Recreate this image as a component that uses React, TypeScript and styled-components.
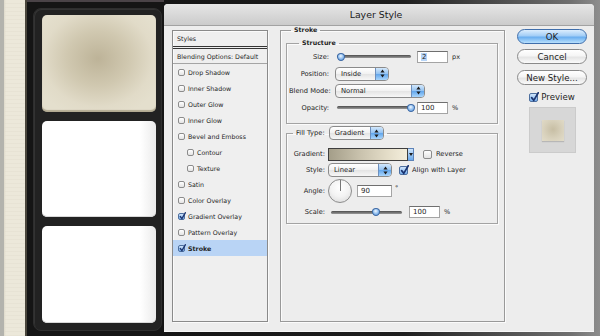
import React from 'react';
import styled, { createGlobalStyle, css } from 'styled-components';

const GlobalStyle = createGlobalStyle`
  html, body { margin: 0; padding: 0; background: #1a1a1a; }
  body { font-family: "DejaVu Sans", "Liberation Sans", sans-serif; color: #1e1e1e; }
  * { box-sizing: border-box; }
`;

const Screen = styled.div`
  display: flex;
  width: 600px;
  height: 336px;
  overflow: hidden;
`;

const Paper = styled.div`
  width: 27px;
  flex: none;
  background:
    linear-gradient(to right, #b3b3ad 0, #b3b3ad 4px, #dedacb 4px, transparent 6px, transparent 25px, #4a463c 25px),
    repeating-linear-gradient(0deg, rgba(120, 110, 80, 0.04) 0 1px, transparent 1px 4px),
    #ece8da;
`;

const Sidebar = styled.div`
  width: 137px;
  flex: none;
  display: flex;
  padding: 8px 2px 5px 6px;
  background: linear-gradient(#4a4347 0, #4a4347 2px, #151515 2px);
`;

const Tray = styled.div`
  flex: 1;
  display: flex;
  flex-direction: column;
  gap: 9px;
  padding: 6px 5px 7px 8px;
  background: #222;
  border: 1px solid #2e2e2e;
  border-radius: 8px;
  box-shadow: inset 1px 1px 0 #333;
`;

const Card = styled.div<{ $tone: 'cream' | 'white' }>`
  flex: 1;
  border-radius: 5px;
  ${p =>
    p.$tone === 'cream'
      ? css`
          background: radial-gradient(ellipse 60% 62% at 49% 45%, #bdb398 0%, #d0c8b0 45%, #e1dbc8 80%, #e4dfcd 100%);
          box-shadow: inset 0 -2px 1px rgba(120, 108, 78, 0.45);
        `
      : css`
          background: linear-gradient(to right, #ffffff 0, #ffffff 86%, #ebebeb 100%);
          box-shadow: inset 0 -1px 0 #d8d8d8;
        `}
`;

const Backdrop = styled.div`
  flex: 1;
  display: flex;
  padding: 4px 6px 5px 0;
  background: linear-gradient(to right, #151515 0%, #1f1f1f 55%, #6f6f6f 93%, #8d8d8d 100%);
`;

const Dialog = styled.div`
  flex: 1;
  display: flex;
  flex-direction: column;
  background: #ededed;
  border-radius: 4px 4px 0 0;
  overflow: hidden;
  box-shadow: 0 1px 0 #f8f8f8;
`;

const TitleBar = styled.div`
  height: 22px;
  flex: none;
  display: flex;
  align-items: center;
  justify-content: center;
  padding-right: 6px;
  font-size: 9.4px;
  color: #1a1a1a;
  background: linear-gradient(#e6e6e6, #cbcbcb);
  border-bottom: 1px solid #a2a2a2;
`;

const Body = styled.div`
  flex: 1;
  display: flex;
  align-items: flex-start;
  gap: 12px;
  padding: 4px 7px 9px 8px;
`;

/* ---------- styles list ---------- */

const StyleList = styled.div`
  width: 96px;
  height: 292px;
  flex: none;
  display: flex;
  flex-direction: column;
  background: #efefef;
  border: 1px solid #8a8a8a;
  box-shadow: inset 1px 1px 0 #fafafa, 1px 1px 0 #fafafa;
  font-size: 6.3px;
  color: #1e1e1e;
`;

const ListHead = styled.div`
  height: 18px;
  flex: none;
  display: flex;
  align-items: center;
  padding-left: 4px;
  border-bottom: 3px double #353535;
`;

const ListBlend = styled.div`
  height: 15px;
  flex: none;
  display: flex;
  align-items: center;
  padding-left: 4px;
  border-bottom: 1px solid #a5a5a5;
`;

const ListItem = styled.div<{ $indent?: boolean; $active?: boolean }>`
  height: 16px;
  flex: none;
  display: flex;
  align-items: center;
  gap: 3px;
  padding-left: ${p => (p.$indent ? 14 : 5)}px;
  background: ${p => (p.$active ? '#b9d4f5' : 'transparent')};
  font-weight: ${p => (p.$active ? 'bold' : 'normal')};
`;

const Box = styled.span<{ $on?: boolean; $size: number }>`
  position: relative;
  flex: none;
  width: ${p => p.$size}px;
  height: ${p => p.$size}px;
  border-radius: 2px;
  border: 1px solid ${p => (p.$on ? '#4d6f9f' : '#8c8c8c')};
  background: ${p => (p.$on ? 'linear-gradient(#cfe4fb, #78b0ee)' : 'linear-gradient(#ffffff, #e4e4e4)')};

  svg {
    position: absolute;
    left: 0;
    top: -2px;
  }
`;

const Checkbox = ({ on, size = 7 }: { on?: boolean; size?: number }) => (
  <Box $on={on} $size={size}>
    {on && (
      <svg width={size} height={size + 1} viewBox="0 0 10 11">
        <path d="M1.8 6.2 L4.2 9.2 L9.2 0.8" fill="none" stroke="#1b3470" strokeWidth="1.9" strokeLinecap="round" />
      </svg>
    )}
  </Box>
);

/* ---------- group boxes ---------- */

const Group = styled.fieldset<{ $pad: string }>`
  margin: 0;
  min-width: 0;
  padding: ${p => p.$pad};
  border: 1px solid #a3a3a3;
  box-shadow: inset 1px 1px 0 #fbfbfb, 1px 1px 0 #fbfbfb;
`;

const MainGroup = styled(Group)`
  width: 225px;
  height: 296px;
  flex: none;
  margin-top: -4px;
  border-color: #999;
`;

const Legend = styled.legend<{ $offset: number }>`
  margin-left: ${p => p.$offset}px;
  padding: 0 3px;
  font-size: 6.3px;
  font-weight: bold;
  line-height: 8px;
  display: flex;
  align-items: center;
  gap: 4px;
`;

const LegendLabel = styled.span`
  font-weight: normal;
  font-size: 6.7px;
`;

const Rows = styled.div`
  display: flex;
  flex-direction: column;
  gap: 2px;
`;

const Row = styled.div<{ $h?: number }>`
  height: ${p => p.$h ?? 15}px;
  display: flex;
  align-items: center;
  font-size: 6.7px;
`;

const Label = styled.span<{ $w: number; $gap: number }>`
  flex: none;
  width: ${p => p.$w}px;
  margin-right: ${p => p.$gap}px;
  text-align: right;
  white-space: nowrap;
`;

const Unit = styled.span<{ $gap?: number; $top?: boolean }>`
  margin-left: ${p => p.$gap ?? 4}px;
  font-size: 6.5px;
  align-self: ${p => (p.$top ? 'flex-start' : 'center')};
  margin-top: ${p => (p.$top ? 5 : 0)}px;
`;

const Text = styled.span<{ $gap?: number }>`
  margin-left: ${p => p.$gap ?? 4}px;
  white-space: nowrap;
`;

const Spacer = styled.span<{ $w: number }>`
  flex: none;
  width: ${p => p.$w}px;
`;

/* ---------- controls ---------- */

const Track = styled.div<{ $w: number; $gap: number }>`
  position: relative;
  flex: none;
  width: ${p => p.$w}px;
  height: 3px;
  margin-left: ${p => p.$gap}px;
  border-radius: 2px;
  background: linear-gradient(#4c4c4c, #9a9a9a);
`;

const Thumb = styled.span`
  position: absolute;
  top: 50%;
  width: 8px;
  height: 8px;
  margin: -4px 0 0 -4px;
  border-radius: 50% 50% 50% 50% / 45% 45% 55% 55%;
  border: 1px solid #3d6aa6;
  background: radial-gradient(circle at 45% 35%, #f2f8ff 0%, #9cc6f2 45%, #4f8dd6 100%);
`;

const Slider = ({ w, gap, value }: { w: number; gap: number; value: number }) => (
  <Track $w={w} $gap={gap}>
    <Thumb style={{ left: `${value}%` }} />
  </Track>
);

const Field = styled.span<{ $w: number; $gap: number }>`
  flex: none;
  display: flex;
  align-items: center;
  width: ${p => p.$w}px;
  height: 12px;
  margin-left: ${p => p.$gap}px;
  padding-left: 3px;
  background: #fff;
  border: 1px solid #a4a4a4;
  border-top-color: #6f6f6f;
  font-size: 7px;
`;

const Selected = styled.span`
  background: #b7d5f8;
  padding: 0 1px;
`;

const Popup = styled.span<{ $w: number }>`
  flex: none;
  display: flex;
  width: ${p => p.$w}px;
  height: 14px;
  border: 1px solid #8b8b8b;
  border-radius: 4px;
  overflow: hidden;
  background: linear-gradient(#ffffff 0%, #f1f1f1 50%, #e4e4e4 52%, #f7f7f7 100%);
  font-size: 6.8px;
  font-weight: normal;
`;

const PopupText = styled.span`
  flex: 1;
  display: flex;
  align-items: center;
  padding-left: 5px;
`;

const PopupArrows = styled.span`
  width: 13px;
  display: flex;
  align-items: center;
  justify-content: center;
  border-left: 1px solid #6d8fbd;
  background: linear-gradient(#d3e8fc 0%, #94c3f2 48%, #62a6ec 52%, #aad6fc 100%);
`;

const Arrows = () => (
  <svg width="5" height="9" viewBox="0 0 5 9">
    <path d="M2.5 0.5 L4.6 3.5 L0.4 3.5Z M0.4 5.5 L4.6 5.5 L2.5 8.5Z" fill="#1c1c1c" />
  </svg>
);

const Select = ({ w, value }: { w: number; value: string }) => (
  <Popup $w={w}>
    <PopupText>{value}</PopupText>
    <PopupArrows>
      <Arrows />
    </PopupArrows>
  </Popup>
);

const GradientBar = styled.span`
  flex: none;
  width: 80px;
  height: 13px;
  border: 1px solid #3e3e3e;
  background: linear-gradient(to right, #a49e89 0%, #c9c2ad 40%, #e4ddc8 75%, #f3eedc 100%);
`;

const GradientMenu = styled.span`
  flex: none;
  width: 6px;
  height: 13px;
  display: flex;
  align-items: center;
  justify-content: center;
  border: 1px solid #5d83b8;
  border-left: none;
  background: linear-gradient(#cfe5fb, #6aa9ec);
`;

const Dial = styled.span`
  flex: none;
  width: 24px;
  height: 24px;
  border-radius: 50%;
  border: 1px solid #8c8c8c;
  background: radial-gradient(circle at 50% 35%, #ffffff 0%, #f3f3f3 50%, #d6d6d6 100%);
  display: flex;
  justify-content: center;
`;

const DialHand = styled.span`
  width: 1px;
  height: 11px;
  background: #777;
`;

/* ---------- buttons column ---------- */

const Side = styled.div`
  width: 70px;
  flex: none;
  display: flex;
  flex-direction: column;
  align-items: center;
  margin-top: -1px;
`;

const PushButton = styled.div<{ $primary?: boolean; $gap: number }>`
  width: 70px;
  height: 15px;
  margin-top: ${p => p.$gap}px;
  display: flex;
  align-items: center;
  justify-content: center;
  border-radius: 8px;
  font-size: 8.6px;
  border: 1px solid ${p => (p.$primary ? '#3f6eab' : '#8a8a8a')};
  background: ${p =>
    p.$primary
      ? 'linear-gradient(#dcedfd 0%, #a2cdf6 45%, #6aaeef 55%, #b8e0fd 100%)'
      : 'linear-gradient(#ffffff 0%, #f5f5f5 45%, #e5e5e5 55%, #fafafa 100%)'};
`;

const PreviewRow = styled.div`
  margin-top: 7px;
  display: flex;
  align-items: center;
  gap: 3px;
  font-size: 8.6px;
`;

const PreviewBox = styled.div`
  margin-top: 5px;
  width: 47px;
  height: 46px;
  display: flex;
  align-items: center;
  justify-content: center;
  background: #d7d7d7;
  border: 1px solid #cbcbcb;
`;

const Swatch = styled.div`
  width: 22px;
  height: 21px;
  margin-left: 2px;
  background: radial-gradient(circle at 50% 45%, #c7bea4 0%, #d9d2bd 60%, #e2dcc9 100%);
  box-shadow: 0 1px 1px rgba(0, 0, 0, 0.15);
`;

const listItems: { name: string; on?: boolean; indent?: boolean; active?: boolean }[] = [
  { name: 'Drop Shadow' },
  { name: 'Inner Shadow' },
  { name: 'Outer Glow' },
  { name: 'Inner Glow' },
  { name: 'Bevel and Emboss' },
  { name: 'Contour', indent: true },
  { name: 'Texture', indent: true },
  { name: 'Satin' },
  { name: 'Color Overlay' },
  { name: 'Gradient Overlay', on: true },
  { name: 'Pattern Overlay' },
  { name: 'Stroke', on: true, active: true },
];

export default function App() {
  return (
    <>
      <GlobalStyle />
      <Screen>
        <Paper />
        <Sidebar>
          <Tray>
            <Card $tone="cream" />
            <Card $tone="white" />
            <Card $tone="white" />
          </Tray>
        </Sidebar>
        <Backdrop>
          <Dialog>
            <TitleBar>Layer Style</TitleBar>
            <Body>
              <StyleList>
                <ListHead>Styles</ListHead>
                <ListBlend>Blending Options: Default</ListBlend>
                {listItems.map(item => (
                  <ListItem key={item.name} $indent={item.indent} $active={item.active}>
                    <Checkbox on={item.on} />
                    {item.name}
                  </ListItem>
                ))}
              </StyleList>

              <MainGroup $pad="5px 6px 4px 5px">
                <Legend $offset={5}>Stroke</Legend>
                <Group $pad="2px 4px 8px 2px">
                  <Legend $offset={10}>Structure</Legend>
                  <Rows>
                    <Row>
                      <Label $w={40} $gap={6}>Size:</Label>
                      <Slider w={74} gap={2} value={5} />
                      <Field $w={31} $gap={6}>
                        <Selected>2</Selected>
                      </Field>
                      <Unit>px</Unit>
                    </Row>
                    <Row>
                      <Label $w={40} $gap={6}>Position:</Label>
                      <Select w={54} value="Inside" />
                    </Row>
                    <Row>
                      <Label $w={40} $gap={6}>Blend Mode:</Label>
                      <Select w={90} value="Normal" />
                    </Row>
                    <Row>
                      <Label $w={40} $gap={6}>Opacity:</Label>
                      <Slider w={76} gap={2} value={97} />
                      <Field $w={31} $gap={4}>100</Field>
                      <Unit>%</Unit>
                    </Row>
                  </Rows>
                </Group>

                <Group $pad="7px 4px 4px 2px" style={{ marginTop: 2 }}>
                  <Legend $offset={4}>
                    <LegendLabel>Fill Type:</LegendLabel>
                    <Select w={55} value="Gradient" />
                  </Legend>
                  <Rows>
                    <Row $h={14}>
                      <Label $w={36} $gap={3}>Gradient:</Label>
                      <GradientBar />
                      <GradientMenu>
                        <svg width="4" height="3" viewBox="0 0 4 3">
                          <path d="M0 0 L4 0 L2 3Z" fill="#1c1c1c" />
                        </svg>
                      </GradientMenu>
                      <Spacer $w={9} />
                      <Checkbox size={9} />
                      <Text>Reverse</Text>
                    </Row>
                    <Row $h={14}>
                      <Label $w={36} $gap={3}>Style:</Label>
                      <Select w={64} value="Linear" />
                      <Spacer $w={7} />
                      <Checkbox size={9} on />
                      <Text>Align with Layer</Text>
                    </Row>
                    <Row $h={24}>
                      <Label $w={36} $gap={3}>Angle:</Label>
                      <Dial>
                        <DialHand />
                      </Dial>
                      <Field $w={35} $gap={5}>90</Field>
                      <Unit $gap={3} $top>°</Unit>
                    </Row>
                    <Row $h={14}>
                      <Label $w={36} $gap={3}>Scale:</Label>
                      <Slider w={71} gap={3} value={63} />
                      <Field $w={31} $gap={7}>100</Field>
                      <Unit>%</Unit>
                    </Row>
                  </Rows>
                </Group>
              </MainGroup>

              <Side>
                <PushButton $primary $gap={0}>OK</PushButton>
                <PushButton $gap={5}>Cancel</PushButton>
                <PushButton $gap={6}>New Style...</PushButton>
                <PreviewRow>
                  <Checkbox size={9} on />
                  Preview
                </PreviewRow>
                <PreviewBox>
                  <Swatch />
                </PreviewBox>
              </Side>
            </Body>
          </Dialog>
        </Backdrop>
      </Screen>
    </>
  );
}
